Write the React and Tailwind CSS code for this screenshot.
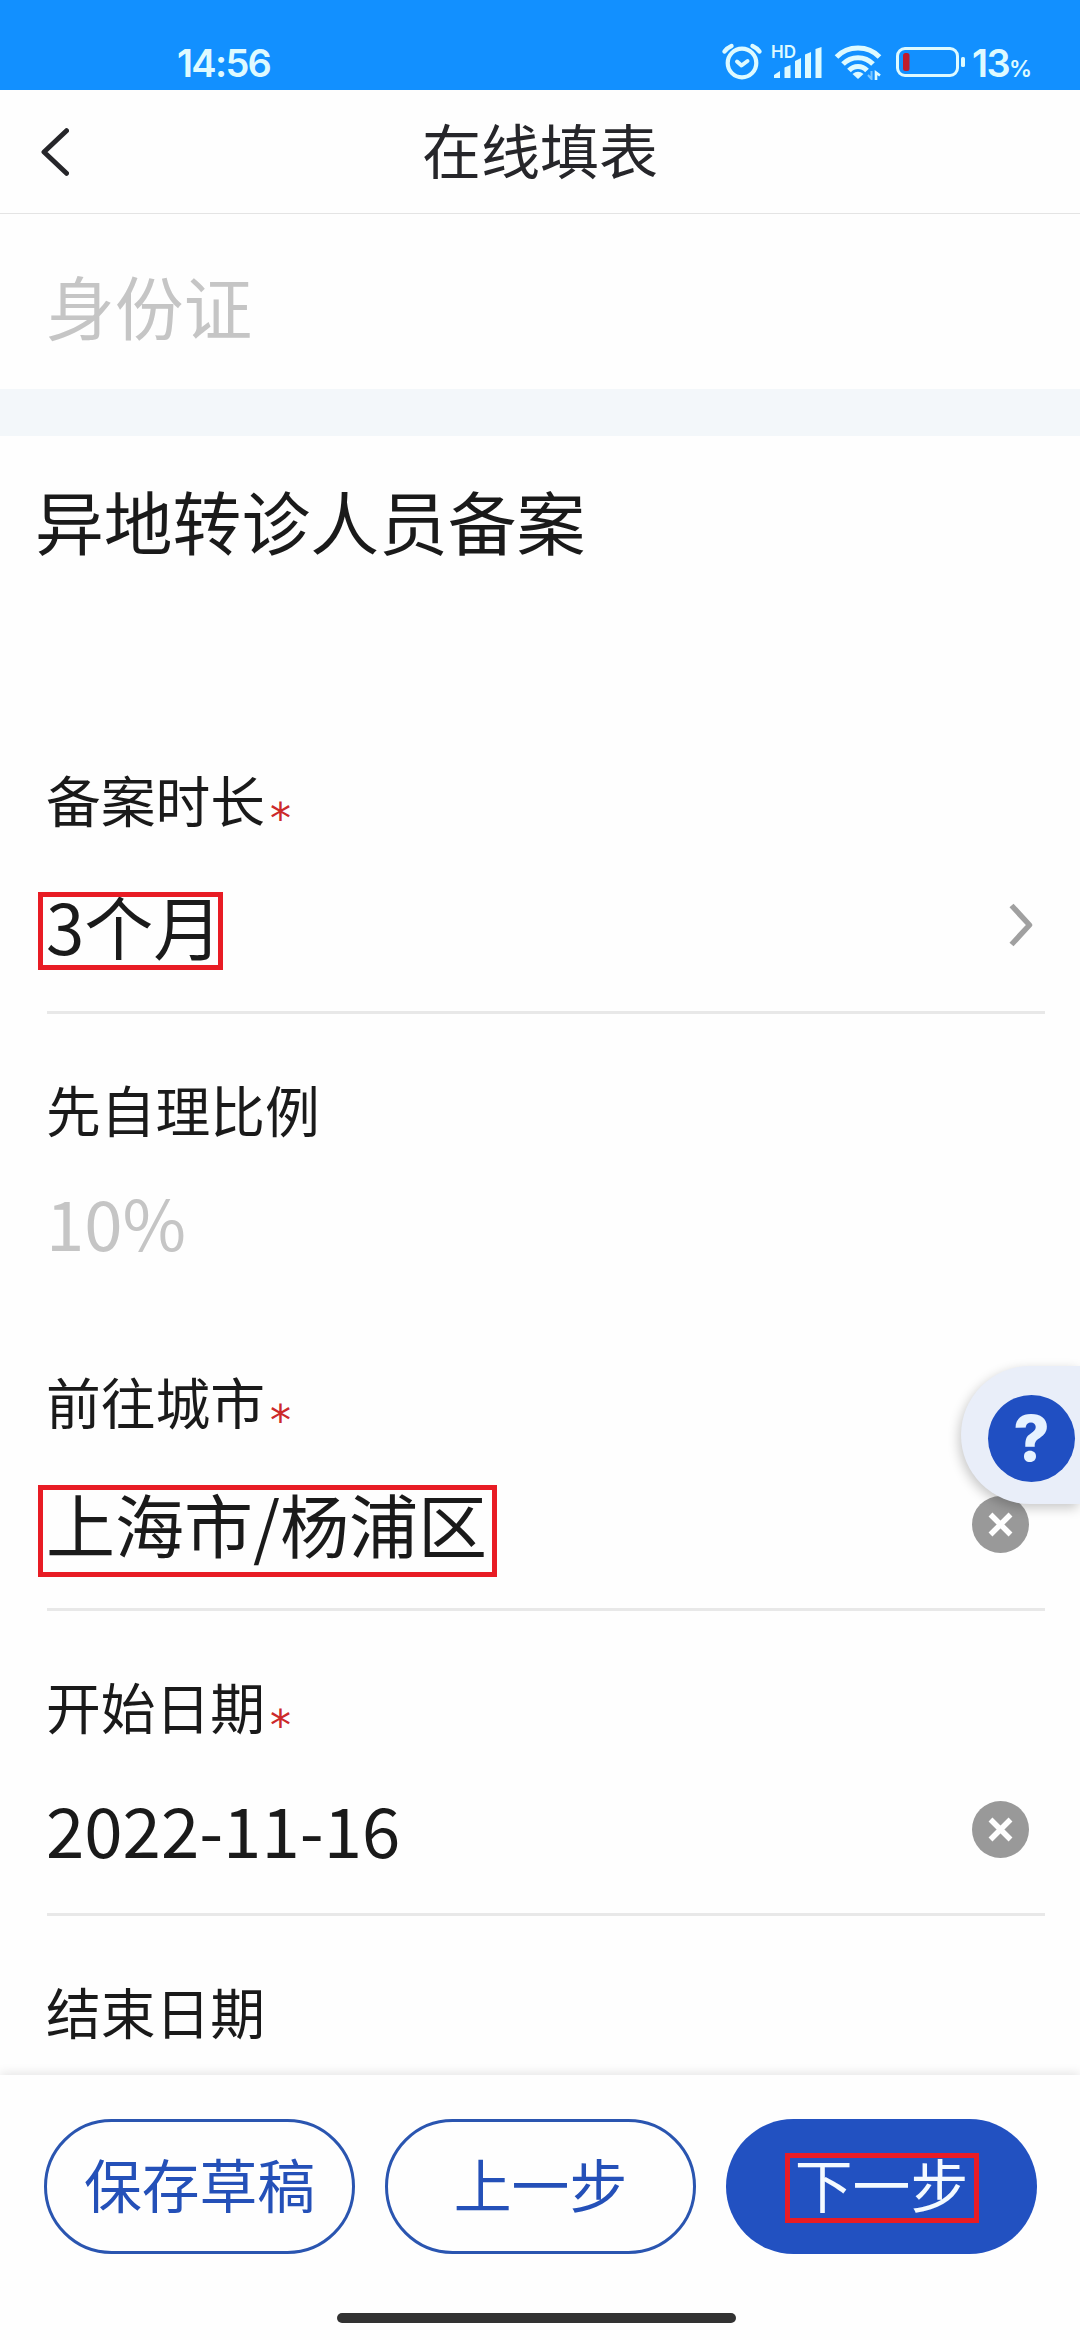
function AlarmIcon() {
  return (
    <svg width="42" height="38" viewBox="0 0 42 38" fill="none" stroke="#defaff" strokeLinecap="round">
      <circle cx="21" cy="20" r="14.3" strokeWidth="4.2" />
      <path d="M16 18.5 L20.5 22.5 L26.5 18" strokeWidth="4" strokeLinejoin="round" />
      <path d="M3.5 8.5 Q6 5 10.5 3" strokeWidth="4.4" />
      <path d="M31.5 3 Q36 5 38.5 8.5" strokeWidth="4.4" />
    </svg>
  );
}

function SignalIcon() {
  return (
    <svg width="50" height="34" viewBox="0 0 50 34" fill="#defaff">
      <path d="M1 33 V30 L7 26 V33 Z" />
      <path d="M11.5 33 V22.5 L17.5 20 V33 Z" />
      <path d="M22 33 V16 L28 13 V33 Z" />
      <path d="M32 33 V9.5 L38 7 V33 Z" />
      <path d="M42.500 33 V4 L48.5 2 V33 Z" />
    </svg>
  );
}

function WifiIcon() {
  return (
    <svg width="48" height="36" viewBox="0 0 48 36" fill="none" stroke="#defaff">
      <path d="M2.5 13 C14 1 34 1 45.5 13" strokeWidth="5" />
      <path d="M9 20 C17 11.5 31 11.5 39 20" strokeWidth="5" />
      <path d="M15 26.5 C20 21 28 21 33 26.5" strokeWidth="5" />
      <path d="M18.5 30 Q24 25.5 29.5 30 L24 35 Z" fill="#defaff" stroke="none" />
      <path d="M37.5 27 V35 L34 31" strokeWidth="2" stroke="#7cc6ff" />
      <path d="M42 36 V28.5 L46 31.5" strokeWidth="2.6" />
    </svg>
  );
}

function BatteryIcon() {
  return (
    <svg width="70" height="32" viewBox="0 0 70 32" fill="none">
      <rect x="1.5" y="2.5" width="60" height="27" rx="7.5" stroke="#defaff" strokeWidth="3" />
      <rect x="7" y="7" width="6.5" height="18" rx="2.5" fill="#c01c2c" />
      <rect x="65" y="11" width="4" height="10" rx="1.5" fill="#defaff" />
    </svg>
  );
}

function StatusBar() {
  return (
    <div className="flex h-[90px] shrink-0 items-start justify-between bg-[#1290ff] pt-[40px] pr-[48px] pl-[177px] font-['Inter',sans-serif] font-semibold text-[#defaff]">
      <div className="text-[38px] leading-[46px] tracking-[-1.7px]">14:56</div>
      <div className="flex items-start">
        <div className="mt-[3px]">
          <AlarmIcon />
        </div>
        <div className="relative mt-[5px] ml-[10px]">
          <SignalIcon />
          <span className="absolute -top-px -left-[2px] text-[17px] leading-[17px]">HD</span>
        </div>
        <div className="mt-[4px] ml-[11px]">
          <WifiIcon />
        </div>
        <div className="mt-[6px] ml-[14px]">
          <BatteryIcon />
        </div>
        <div className="ml-[6px] flex items-baseline leading-[46px]">
          <span className="text-[38px] tracking-[-1.7px]">13</span>
          <span className="text-[23px]">%</span>
        </div>
      </div>
    </div>
  );
}

function Header() {
  return (
    <div className="flex h-[124px] shrink-0 items-center border-b border-[#e4e4e4] pr-[69px] pl-[41px]">
      <svg width="28" height="48" viewBox="0 0 28 48" fill="none" stroke="#26262a" strokeWidth="5" strokeLinecap="round" strokeLinejoin="round">
        <path d="M25.5 2.7 L3 24 L25.5 45.3" />
      </svg>
      <h1 className="flex-1 pb-[5px] text-center text-[59px] leading-[80px] text-[#26262a]">在线填表</h1>
    </div>
  );
}

function CloseIcon() {
  return (
    <svg className="mt-[4px]" width="57" height="57" viewBox="0 0 57 57">
      <circle cx="28.5" cy="28.5" r="28.5" fill="#999" />
      <path d="M18.5 18.5 L38.5 38.5 M38.5 18.5 L18.5 38.5" stroke="#fff" strokeWidth="5.5" />
    </svg>
  );
}

function ArrowIcon() {
  return (
    <svg width="24" height="44" viewBox="0 0 24 44" fill="none" stroke="#a0a0a0" strokeWidth="5.5">
      <path d="M2.5 2.5 L20.5 22 L2.5 41.5" strokeLinejoin="round" />
    </svg>
  );
}

function Label({ text, required }) {
  return (
    <div className="-ml-px flex h-[80px] text-[54.75px] leading-[80px]">
      {text}
      {required && <span className="mt-[21px] ml-[5px] font-['DejaVu_Sans',sans-serif] text-[42px] text-[#cc2a2a]">*</span>}
    </div>
  );
}

export default function App() {
  return (
    <div className="relative flex h-[2340px] w-[1080px] flex-col overflow-hidden bg-[#fefefe] font-['Noto_Sans_CJK_SC',sans-serif] text-[#1a1a1a]">
      <StatusBar />
      <Header />

      <main className="min-h-0 flex-1 overflow-hidden">
        <div className="flex h-[175px] items-center pt-[7px] pl-[46px] text-[68.8px] leading-[100px] text-[#c5c5c5]">身份证</div>
        <div className="h-[47px] bg-[#f3f7fa]" />
        <h2 className="pt-[34px] pl-[35px] text-[68.8px] leading-[100px]">异地转诊人员备案</h2>

        <div className="pt-[188px] pr-[35px] pl-[47px]">
          <div className="border-b-3 border-[#e8e8e8]">
            <Label text="备案时长" required />
            <div className="flex h-[173px] items-center justify-between pr-[12px] text-[69px] leading-[100px]">
              <span className="relative -ml-px">
                3个月
                <span className="absolute top-[17px] -left-[8px] h-[78px] w-[185px] border-5 border-[#e81c24]" />
              </span>
              <ArrowIcon />
            </div>
          </div>

          <div className="pt-[54px] pb-[67px]">
            <Label text="先自理比例" />
            <div className="-ml-px flex h-[145px] items-center text-[69px] leading-[100px] text-[#c5c5c5]">10%</div>
          </div>

          <div className="border-b-3 border-[#e8e8e8] pb-[3px]">
            <Label text="前往城市" required />
            <div className="flex h-[165px] items-center justify-between pr-[16px] text-[69px] leading-[100px]">
              <span className="relative -ml-px">
                上海市/杨浦区
                <span className="absolute top-[12px] -left-[8px] h-[92px] w-[459px] border-5 border-[#e81c24]" />
              </span>
              <CloseIcon />
            </div>
          </div>

          <div className="border-b-3 border-[#e8e8e8] pt-[54px] pb-[3px]">
            <Label text="开始日期" required />
            <div className="flex h-[165px] items-center justify-between pr-[16px] text-[69px] leading-[100px]">
              <span className="-ml-px">2022-11-16</span>
              <CloseIcon />
            </div>
          </div>

          <div className="pt-[54px]">
            <Label text="结束日期" />
          </div>
        </div>
      </main>

      <footer className="z-10 h-[265px] shrink-0 bg-[#fefefe] pt-[44px] pl-[44px] shadow-[0_-2px_10px_rgba(0,0,0,0.1)]">
        <div className="flex gap-[30px] text-[57.8px] leading-[120px]">
          <button className="h-[135px] w-[311px] rounded-full border-3 border-[#2a55b0] pb-[7px] text-[#2450b8]">保存草稿</button>
          <button className="h-[135px] w-[311px] rounded-full border-3 border-[#2a55b0] pb-[7px] text-[#2450b8]">上一步</button>
          <button className="relative h-[135px] w-[311px] rounded-full bg-[#2251c1] pb-[7px] text-[#f4faff]">
            下一步
            <span className="absolute top-[34px] left-[59px] h-[70px] w-[194px] border-5 border-[#e81c24]" />
          </button>
        </div>
        <div className="mt-[59px] ml-[293px] h-[10px] w-[399px] rounded-full bg-[#323232]" />
      </footer>

      {/* floating help entry, sits on the right screen edge */}
      <div className="absolute top-[1366px] right-0 flex h-[138px] w-[119px] items-center rounded-l-full bg-[#e9eef9] pt-[6px] pl-[27px] shadow-[-2px_4px_12px_rgba(0,0,0,0.22)]">
        <div className="flex h-[87px] w-[87px] items-center justify-center rounded-full bg-[#204fc2] font-['Inter',sans-serif] text-[63px] leading-[87px] font-extrabold text-[#e6f2ff]">?</div>
      </div>
    </div>
  );
}
